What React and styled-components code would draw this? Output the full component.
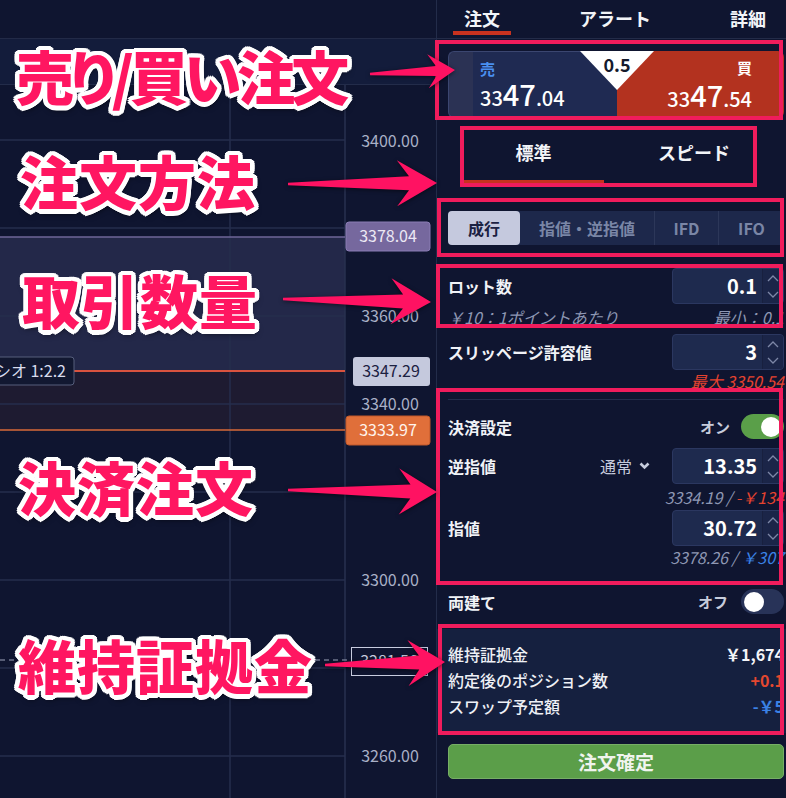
import React from 'react';
import styled, { createGlobalStyle } from 'styled-components';

const GlobalStyle = createGlobalStyle`
  * { box-sizing: border-box; }
  html, body { margin: 0; padding: 0; background: #0f1530; overflow: hidden; }
  body {
    font-family: "Noto Sans CJK JP", "Noto Sans", sans-serif;
    color: #eef0f6;
  }
`;

const Screen = styled.div`
  position: relative;
  display: flex;
  width: 796px;
  height: 798px;
  overflow: hidden;
  background: #0f1530;
`;

/* ---------- chart side ---------- */

const ChartArea = styled.section`
  width: 436px;
  flex: none;
  display: flex;
  flex-direction: column;
`;

const ChartTop = styled.div`
  height: 39px;
  flex: none;
  border-bottom: 1px solid #222a47;
`;

const Legend = styled.div`
  height: 46px;
  flex: none;
  background: #131c3b;
  border-bottom: 1px solid #232c4a;
`;

const ChartSvg = styled.svg`
  display: block;
  flex: none;
  font-family: "Noto Sans CJK JP", "Noto Sans", sans-serif;
`;

const gridYs = [140, 228, 316, 404, 492, 580, 668, 756].map((y) => y - 85);
const axisLabels = [
  ['3400.00', 141],
  ['3360.00', 316],
  ['3340.00', 404],
  ['3300.00', 580],
  ['3260.00', 756],
];

const Chart = () => (
  <ChartSvg width="436" height="713" viewBox="0 0 436 713">
    <rect x="0" y="152" width="345" height="134" fill="#232849" />
    <rect x="0" y="286" width="345" height="59" fill="#1e1b31" />
    {gridYs.map((y) => (
      <line key={y} x1="0" x2="345" y1={y} y2={y} stroke="#262e4c" strokeWidth="1.5" />
    ))}
    <line x1="230" x2="230" y1="0" y2="713" stroke="#262e4c" strokeWidth="1.5" />
    <line x1="345" x2="345" y1="0" y2="713" stroke="#29314f" strokeWidth="1.5" />
    <line x1="0" x2="345" y1="152" y2="152" stroke="#6f6698" strokeWidth="1.5" />
    <line x1="74" x2="345" y1="286" y2="286" stroke="#d9533f" strokeWidth="2" />
    <line x1="0" x2="345" y1="345" y2="345" stroke="#d86a38" strokeWidth="1.5" />
    <line x1="0" x2="351" y1="575" y2="575" stroke="#a0a6bc" strokeWidth="1.2" strokeDasharray="5 4" />

    {axisLabels.map(([t, y]) => (
      <text key={t} x="390" y={y - 85 + 6} fontSize="16" fill="#a9b0c7" textAnchor="middle">{t}</text>
    ))}

    <rect x="346" y="137" width="84" height="29" rx="3" fill="#76689e" stroke="#8a7cb4" />
    <text x="388" y="157" fontSize="16" fill="#ece8f4" textAnchor="middle">3378.04</text>

    <rect x="353" y="272" width="77" height="29" rx="3" fill="#c5c9dd" />
    <text x="391" y="292" fontSize="16" fill="#1c2142" textAnchor="middle">3347.29</text>

    <rect x="346" y="331" width="84" height="29" rx="3" fill="#e06f3a" stroke="#c0582a" />
    <text x="388" y="351" fontSize="16" fill="#fff4ec" textAnchor="middle">3333.97</text>

    <rect x="351.5" y="562.5" width="76" height="28" fill="#0f1530" stroke="#c8ccdf" />
    <text x="389" y="582" fontSize="16" fill="#c8ccdf" textAnchor="middle">3281.56</text>

    <rect x="-4" y="272" width="78" height="28" rx="3" fill="#121831" stroke="#565e7c" />
    <text x="66" y="292" fontSize="16" fill="#d8dced" textAnchor="end">レシオ 1:2.2</text>
  </ChartSvg>
);

/* ---------- order panel ---------- */

const Panel = styled.aside`
  width: 360px;
  flex: none;
  display: flex;
  flex-direction: column;
  border-left: 1px solid #232c4a;
  padding: 0 12px 0 11px;
`;

const TopTabs = styled.nav`
  display: flex;
  gap: 57px;
  height: 39px;
  margin: 0 -12px 0 -11px;
  padding-left: 16px;
  border-bottom: 1px solid #232b48;
`;

const TopTab = styled.div`
  position: relative;
  display: flex;
  align-items: center;
  padding: 0 11px 2px;
  font-size: 18px;
  font-weight: 700;
  color: #f2f4f8;

  &::after {
    content: '';
    display: ${(p) => (p.$active ? 'block' : 'none')};
    position: absolute;
    left: 0;
    right: 0;
    bottom: 3px;
    height: 4px;
    background: #c8321f;
  }
`;

const Quote = styled.div`
  position: relative;
  display: grid;
  grid-template-columns: 169px 1fr;
  height: 59px;
  margin-top: 12px;
`;

const QuoteSide = styled.div`
  display: flex;
  flex-direction: column;
  justify-content: space-between;
  align-items: ${(p) => (p.$buy ? 'flex-end' : 'flex-start')};
  padding: ${(p) => (p.$buy ? '8px 32px 3px 0' : '8px 0 3px 31px')};
  background: ${(p) =>
    p.$buy ? '#b3321f' : 'linear-gradient(to right, #2b3254 24px, #1f2a52 24px)'};
  border: ${(p) => (p.$buy ? 'none' : '1px solid #3b4670')};
  border-right: none;
  border-radius: ${(p) => (p.$buy ? '0 6px 6px 0' : '6px 0 0 6px')};
`;

const SideLabel = styled.div`
  font-size: 15px;
  font-weight: 700;
  line-height: 18px;
  color: ${(p) => (p.$buy ? '#ffffff' : '#4a8ff0')};
`;

const Price = styled.div`
  line-height: 30px;
  color: #ffffff;
  font-weight: 500;
  white-space: nowrap;
`;

const PriceSmall = styled.span`
  font-size: 20px;
`;

const PriceBig = styled.span`
  font-size: 29px;
`;

const Spread = styled.div`
  position: absolute;
  left: 132px;
  top: 0;
  width: 74px;
  height: 39px;
  background: #ffffff;
  clip-path: polygon(0 0, 100% 0, 50% 100%);
  text-align: center;
  padding-top: 2px;
  font-size: 18px;
  font-weight: 700;
  line-height: 22px;
  color: #141a2c;
`;

const MethodTabs = styled.div`
  display: grid;
  grid-template-columns: 141px 1fr;
  height: 64px;
  margin-top: 10px;
  padding-left: 15px;
`;

const MethodTab = styled.div`
  position: relative;
  display: flex;
  align-items: center;
  justify-content: center;
  font-size: 18px;
  font-weight: 700;
  color: #f2f4f8;

  &::after {
    content: '';
    display: ${(p) => (p.$active ? 'block' : 'none')};
    position: absolute;
    left: 0;
    right: 0;
    bottom: 0;
    height: 4px;
    background: #c8321f;
  }
`;

const Segmented = styled.div`
  display: grid;
  grid-template-columns: 72px 134px 64px 1fr;
  height: 34px;
  margin-top: 27px;
  background: #1d284b;
  border-radius: 4px;
`;

const Segment = styled.div`
  display: flex;
  align-items: center;
  justify-content: center;
  font-size: 16px;
  font-weight: 700;
  border-radius: 4px;
  color: ${(p) => (p.$active ? '#1b2142' : '#7a86a6')};
  background: ${(p) => (p.$active ? '#c5c9de' : 'transparent')};
  border-left: ${(p) => (p.$sep ? '1px solid #2c3759' : 'none')};
  border-top-left-radius: ${(p) => (p.$sep ? '0' : '4px')};
  border-bottom-left-radius: ${(p) => (p.$sep ? '0' : '4px')};
`;

const FieldRow = styled.div`
  display: flex;
  align-items: center;
  justify-content: space-between;
  height: ${(p) => p.$h || 36}px;
  margin-top: ${(p) => p.$mt || 0}px;
`;

const FieldLabel = styled.div`
  font-size: 16px;
  font-weight: 700;
  color: #f0f2f7;
`;

const RightGroup = styled.div`
  display: flex;
  align-items: center;
  gap: ${(p) => p.$gap || 11}px;
`;

const NumberBox = styled.div`
  display: flex;
  width: 112px;
  height: 36px;
  background: #1e2a4e;
  border: 1px solid #2b3760;
  border-radius: 4px;
  overflow: hidden;
`;

const NumberValue = styled.div`
  flex: 1;
  text-align: right;
  padding-right: 5px;
  font-size: 20px;
  font-weight: 700;
  line-height: 34px;
  color: #ffffff;
`;

const Spinner = styled.div`
  width: 21px;
  display: flex;
  flex-direction: column;
  align-items: center;
  justify-content: center;
  gap: 9px;
  background: #1b2548;
  border-left: 1px solid #18203f;
`;

const Hint = styled.div`
  display: flex;
  justify-content: ${(p) => p.$align || 'space-between'};
  height: 18px;
  margin-top: ${(p) => p.$mt || 0}px;
  font-size: 16px;
  font-style: italic;
  line-height: 18px;
  color: #8e97b3;
  white-space: nowrap;
`;

const Tone = styled.span`
  color: ${(p) => (p.$tone === 'red' ? '#e5432f' : p.$tone === 'blue' ? '#3b82e6' : 'inherit')};
`;

const Divider = styled.div`
  height: 1px;
  margin-top: 9px;
  background: #242d4c;
`;

const StateText = styled.span`
  font-size: 15px;
  font-weight: 700;
  color: #c7ccdc;
`;

const Toggle = styled.div`
  display: flex;
  align-items: center;
  justify-content: ${(p) => (p.$on ? 'flex-end' : 'flex-start')};
  width: 43px;
  height: 25px;
  padding: 0 3px;
  border-radius: 13px;
  background: ${(p) => (p.$on ? '#5a9f49' : '#283358')};

  &::before {
    content: '';
    width: 20px;
    height: 20px;
    border-radius: 50%;
    background: #ffffff;
  }
`;

const Dropdown = styled.div`
  display: flex;
  align-items: center;
  gap: 7px;
  font-size: 16px;
  color: #c6cbdc;
`;

const Summary = styled.div`
  margin: 15px -12px 0 -11px;
  padding: 12px 12px 14px 11px;
  background: #15203f;
`;

const SummaryRow = styled.div`
  display: flex;
  align-items: center;
  justify-content: space-between;
  height: 26px;
  font-size: 16px;
  font-weight: 500;
  color: #eef0f6;
`;

const SummaryValue = styled.span`
  font-weight: 700;
  color: ${(p) => (p.$tone === 'red' ? '#e5482f' : p.$tone === 'blue' ? '#3b82e6' : '#f4f5f9')};
`;

const SubmitButton = styled.button`
  height: 35px;
  margin-top: 11px;
  border: 1px solid #77ae66;
  border-radius: 5px;
  background: #5b9e49;
  font-family: inherit;
  font-size: 19px;
  font-weight: 700;
  color: #f0f4ee;
`;

/* ---------- annotations ---------- */

const Overlay = styled.div`
  position: absolute;
  inset: 0;
  pointer-events: none;
`;

const ring = Array.from({ length: 16 }, (_, i) => {
  const a = (i / 16) * Math.PI * 2;
  return `${(Math.cos(a) * 4.5).toFixed(1)}px ${(Math.sin(a) * 4.5).toFixed(1)}px 0 #ffffff`;
}).join(', ');

const Callout = styled.div`
  position: absolute;
  left: ${(p) => p.$x}px;
  top: ${(p) => p.$y}px;
  font-size: 58px;
  font-weight: 900;
  font-feature-settings: "palt";
  line-height: 1;
  letter-spacing: ${(p) => (p.$tight ? '-4px' : '1px')};
  white-space: nowrap;
  color: #ff1661;
  text-shadow: ${ring}, 1px 4px 6px rgba(0, 0, 0, 0.75);
`;

const MarkSvg = styled.svg`
  position: absolute;
  left: 0;
  top: 0;
`;

const arrowPoints = ([tx, ty], [hx, hy], len, half, neck) => {
  const dx = hx - tx;
  const dy = hy - ty;
  const d = Math.hypot(dx, dy);
  const ux = dx / d;
  const uy = dy / d;
  const nx = -uy;
  const ny = ux;
  const bx = hx - ux * len;
  const by = hy - uy * len;
  const jx = hx - ux * len * 0.7;
  const jy = hy - uy * len * 0.7;
  const p = (x, y) => `${x.toFixed(1)},${y.toFixed(1)}`;
  return [
    p(tx + nx * 1.2, ty + ny * 1.2),
    p(jx + nx * neck, jy + ny * neck),
    p(bx + nx * half, by + ny * half),
    p(hx, hy),
    p(bx - nx * half, by - ny * half),
    p(jx - nx * neck, jy - ny * neck),
    p(tx - nx * 1.2, ty - ny * 1.2),
  ].join(' ');
};

const arrows = [
  [[370, 74], [455, 70], 27, 17, 5],
  [[288, 184], [437, 183], 40, 23, 7],
  [[283, 299], [431, 302], 40, 23, 7],
  [[288, 490], [437, 492], 38, 23, 7],
  [[325, 665], [445, 662], 37, 23, 7],
];

const frames = [
  [437, 42, 344, 76],
  [462, 128, 293, 57],
  [439, 200, 343, 55],
  [438, 266, 343, 60],
  [438, 390, 343, 193],
  [440, 626, 342, 107],
];

const Annotations = () => (
  <Overlay>
    <Callout $x={16} $y={46} $tight>売り/買い注文</Callout>
    <Callout $x={20} $y={151}>注文方法</Callout>
    <Callout $x={22} $y={270}>取引数量</Callout>
    <Callout $x={18} $y={457}>決済注文</Callout>
    <Callout $x={18} $y={635}>維持証拠金</Callout>
    <MarkSvg width="786" height="798" viewBox="0 0 786 798">
      {frames.map(([x, y, w, h]) => (
        <rect key={`${x}-${y}`} x={x} y={y} width={w} height={h} fill="none" stroke="#f01c5c" strokeWidth="4" />
      ))}
      <g fill="#ff1262" style={{ filter: 'drop-shadow(0 1px 2px rgba(0,0,0,0.55))' }}>
        {arrows.map(([t, h, len, half, neck]) => (
          <polygon key={`${t[0]}-${t[1]}`} points={arrowPoints(t, h, len, half, neck)} />
        ))}
      </g>
    </MarkSvg>
  </Overlay>
);

const Chevrons = () => (
  <Spinner>
    <svg width="12" height="7" viewBox="0 0 12 7">
      <polyline points="1,6 6,1 11,6" fill="none" stroke="#7d87a7" strokeWidth="1.3" />
    </svg>
    <svg width="12" height="7" viewBox="0 0 12 7">
      <polyline points="1,1 6,6 11,1" fill="none" stroke="#7d87a7" strokeWidth="1.3" />
    </svg>
  </Spinner>
);

const NumberField = ({ value }) => (
  <NumberBox>
    <NumberValue>{value}</NumberValue>
    <Chevrons />
  </NumberBox>
);

const App = () => {
  return (
    <Screen>
      <GlobalStyle />
      <ChartArea>
        <ChartTop />
        <Legend />
        <Chart />
      </ChartArea>

      <Panel>
        <TopTabs>
          <TopTab $active>注文</TopTab>
          <TopTab>アラート</TopTab>
          <TopTab>詳細</TopTab>
        </TopTabs>

        <Quote>
          <QuoteSide>
            <SideLabel>売</SideLabel>
            <Price>
              <PriceSmall>33</PriceSmall>
              <PriceBig>47</PriceBig>
              <PriceSmall>.04</PriceSmall>
            </Price>
          </QuoteSide>
          <QuoteSide $buy>
            <SideLabel $buy>買</SideLabel>
            <Price>
              <PriceSmall>33</PriceSmall>
              <PriceBig>47</PriceBig>
              <PriceSmall>.54</PriceSmall>
            </Price>
          </QuoteSide>
          <Spread>0.5</Spread>
        </Quote>

        <MethodTabs>
          <MethodTab $active>標準</MethodTab>
          <MethodTab>スピード</MethodTab>
        </MethodTabs>

        <Segmented>
          <Segment $active>成行</Segment>
          <Segment>指値・逆指値</Segment>
          <Segment $sep>IFD</Segment>
          <Segment $sep>IFO</Segment>
        </Segmented>

        <FieldRow $mt={23}>
          <FieldLabel>ロット数</FieldLabel>
          <NumberField value="0.1" />
        </FieldRow>
        <Hint $mt={4}>
          <span>￥10：1ポイントあたり</span>
          <span>最小：0.1</span>
        </Hint>

        <FieldRow $mt={8}>
          <FieldLabel>スリッページ許容値</FieldLabel>
          <NumberField value="3" />
        </FieldRow>
        <Hint $mt={2} $align="flex-end">
          <Tone $tone="red">最大 3350.54</Tone>
        </Hint>

        <Divider />

        <FieldRow $mt={14} $h={25}>
          <FieldLabel>決済設定</FieldLabel>
          <RightGroup>
            <StateText>オン</StateText>
            <Toggle $on />
          </RightGroup>
        </FieldRow>

        <FieldRow $mt={9}>
          <FieldLabel>逆指値</FieldLabel>
          <RightGroup $gap={22}>
            <Dropdown>
              通常
              <svg width="11" height="8" viewBox="0 0 11 8">
                <polyline points="1.5,1.5 5.5,5.5 9.5,1.5" fill="none" stroke="#c6cbdc" strokeWidth="2.6" />
              </svg>
            </Dropdown>
            <NumberField value="13.35" />
          </RightGroup>
        </FieldRow>
        <Hint $mt={4} $align="flex-end">
          <span>3334.19 / <Tone $tone="red">-￥134</Tone></span>
        </Hint>

        <FieldRow $mt={4}>
          <FieldLabel>指値</FieldLabel>
          <NumberField value="30.72" />
        </FieldRow>
        <Hint $mt={2} $align="flex-end">
          <span>3378.26 / <Tone $tone="blue">￥307</Tone></span>
        </Hint>

        <FieldRow $mt={23} $h={25}>
          <FieldLabel>両建て</FieldLabel>
          <RightGroup $gap={13}>
            <StateText>オフ</StateText>
            <Toggle />
          </RightGroup>
        </FieldRow>

        <Summary>
          <SummaryRow>
            <span>維持証拠金</span>
            <SummaryValue>￥1,674</SummaryValue>
          </SummaryRow>
          <SummaryRow>
            <span>約定後のポジション数</span>
            <SummaryValue $tone="red">+0.1</SummaryValue>
          </SummaryRow>
          <SummaryRow>
            <span>スワップ予定額</span>
            <SummaryValue $tone="blue">-￥5</SummaryValue>
          </SummaryRow>
        </Summary>

        <SubmitButton>注文確定</SubmitButton>
      </Panel>

      <Annotations />
    </Screen>
  );
};

export default App;
